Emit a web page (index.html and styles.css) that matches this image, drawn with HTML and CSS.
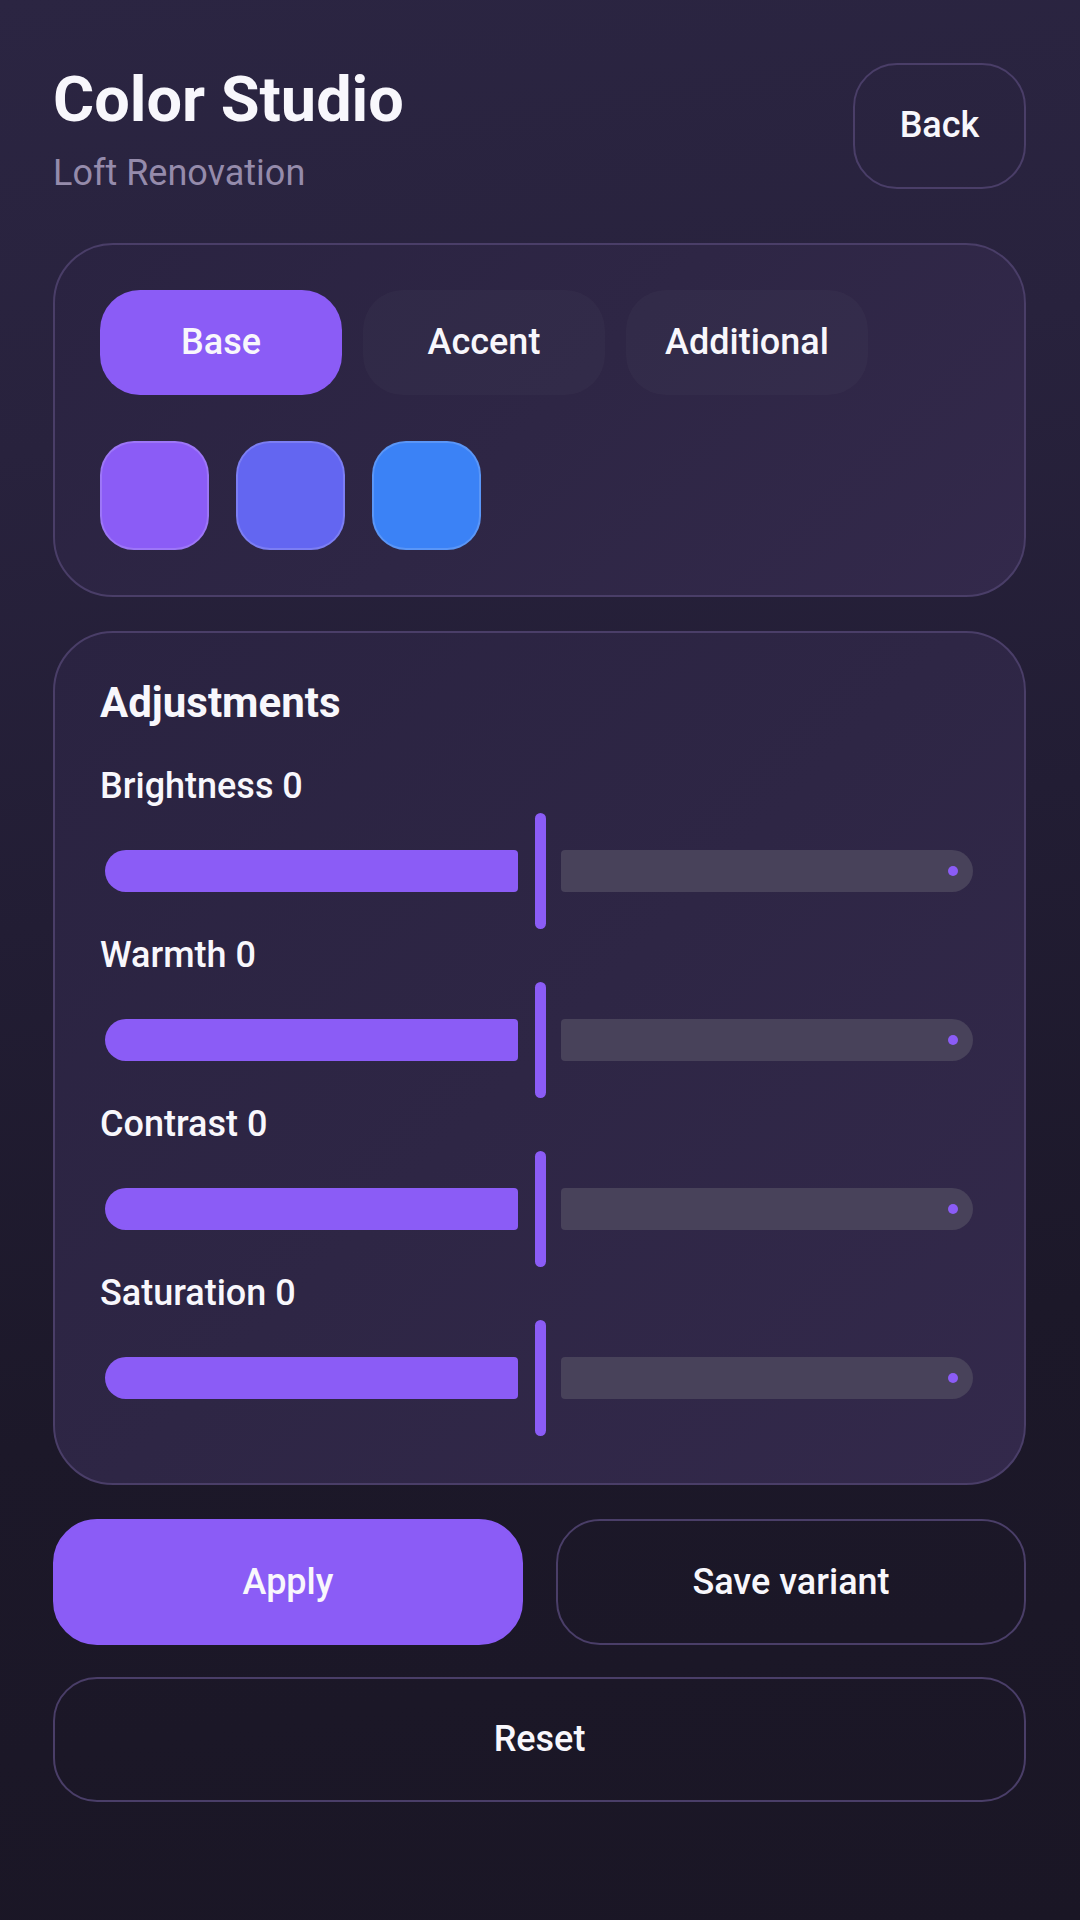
FILE: index.html
```html
<!DOCTYPE html>
<html lang="en">
<head>
<meta charset="utf-8">
<title>Color Studio</title>
<link rel="stylesheet" href="styles.css">
</head>
<body>
<main class="page">
  <header class="header">
    <div class="heading">
      <h1 class="title">Color Studio</h1>
      <p class="subtitle">Loft Renovation</p>
    </div>
    <button class="btn btn-outline btn-back">Back</button>
  </header>

  <section class="card palette">
    <div class="tabs">
      <button class="tab tab-active">Base</button>
      <button class="tab">Accent</button>
      <button class="tab">Additional</button>
    </div>
    <div class="swatches">
      <span class="swatch swatch-violet"></span>
      <span class="swatch swatch-indigo"></span>
      <span class="swatch swatch-blue"></span>
    </div>
  </section>

  <section class="card adjustments">
    <h2 class="section-title">Adjustments</h2>
    <div class="control">
      <div class="control-label">Brightness 0</div>
      <div class="slider">
        <span class="track-active"></span>
        <span class="thumb"></span>
        <span class="track-inactive"><span class="stop"></span></span>
      </div>
    </div>
    <div class="control">
      <div class="control-label">Warmth 0</div>
      <div class="slider">
        <span class="track-active"></span>
        <span class="thumb"></span>
        <span class="track-inactive"><span class="stop"></span></span>
      </div>
    </div>
    <div class="control">
      <div class="control-label">Contrast 0</div>
      <div class="slider">
        <span class="track-active"></span>
        <span class="thumb"></span>
        <span class="track-inactive"><span class="stop"></span></span>
      </div>
    </div>
    <div class="control">
      <div class="control-label">Saturation 0</div>
      <div class="slider">
        <span class="track-active"></span>
        <span class="thumb"></span>
        <span class="track-inactive"><span class="stop"></span></span>
      </div>
    </div>
  </section>

  <div class="actions">
    <button class="btn btn-primary">Apply</button>
    <button class="btn btn-outline">Save variant</button>
  </div>
  <button class="btn btn-outline btn-wide">Reset</button>
</main>
</body>
</html>
```

FILE: styles.css
```css
* {
  box-sizing: border-box;
}

html,
body {
  margin: 0;
  padding: 0;
}

body {
  min-height: 100vh;
  font-family: Roboto, "Noto Sans", "Liberation Sans", sans-serif;
  color: #f8f7fc;
  background: linear-gradient(172deg, #2b2542 0%, #28223d 22%, #221d34 45%, #1c1829 70%, #1a1625 100%);
}

.page {
  padding: 61px 54px 0 53px;
  display: flex;
  flex-direction: column;
}

/* Header */
.header {
  display: flex;
  justify-content: space-between;
  align-items: flex-start;
  margin-bottom: 48px;
}

.title {
  margin: 0;
  font-size: 63px;
  line-height: 77px;
  font-weight: 700;
  color: #f8f7fc;
}

.subtitle {
  margin: 14px 0 0;
  font-size: 36px;
  line-height: 1.2;
  font-weight: 400;
  color: #958bab;
}

/* Buttons */
.btn {
  font-family: inherit;
  font-size: 36px;
  font-weight: 500;
  line-height: 1.2;
  color: #f8f7fc;
  height: 126px;
  border-radius: 44px;
  display: flex;
  align-items: center;
  justify-content: center;
  padding: 0;
  cursor: pointer;
}

.btn-outline {
  background: transparent;
  border: 2px solid #4a3e68;
}

.btn-primary {
  background: #8b5cf6;
  border: 2px solid #8b5cf6;
}

.btn-back {
  width: 173px;
  margin-top: 2px;
}

.btn-wide {
  width: 100%;
  margin-top: 32px;
  height: 125px;
}

.actions {
  display: grid;
  grid-template-columns: 1fr 1fr;
  gap: 33px;
}

/* Cards */
.card {
  border: 2px solid #4a3e68;
  border-radius: 60px;
  background: linear-gradient(135deg, #2a2341 0%, #2e2645 50%, #33294b 100%);
}

.palette {
  padding: 45px;
  display: flex;
  flex-direction: column;
  gap: 46px;
}

.tabs {
  display: flex;
  gap: 21px;
}

.tab {
  width: 242px;
  height: 105px;
  border: none;
  border-radius: 40px;
  background: rgba(255, 255, 255, 0.025);
  font-family: inherit;
  font-size: 36px;
  font-weight: 500;
  line-height: 1.2;
  color: #f8f7fc;
  display: flex;
  align-items: center;
  justify-content: center;
  padding: 0;
}

.tab-active {
  background: #8b5cf6;
}

.swatches {
  display: flex;
  gap: 27px;
}

.swatch {
  width: 109px;
  height: 109px;
  border-radius: 34px;
  border: 2px solid rgba(255, 255, 255, 0.16);
}

.swatch-violet {
  background: #8b5cf6;
}

.swatch-indigo {
  background: #6366f1;
}

.swatch-blue {
  background: #3b82f6;
}

/* Adjustments */
.adjustments {
  margin-top: 34px;
  margin-bottom: 34px;
  padding: 45px 45px 42px;
}

.section-title {
  margin: 0 0 37px;
  font-size: 42px;
  line-height: 50px;
  font-weight: 700;
}

.control-label {
  font-size: 36px;
  line-height: 42px;
  font-weight: 500;
}

.slider {
  height: 127px;
  display: flex;
  align-items: center;
  padding: 0 6px 0 5px;
}

.track-active,
.track-inactive {
  flex: 1 1 0;
  min-width: 0;
  height: 42px;
}

.track-active {
  background: #8b5cf6;
  border-radius: 21px 4px 4px 21px;
}

.thumb {
  flex: none;
  width: 11px;
  height: 116px;
  border-radius: 6px;
  background: #8b5cf6;
  margin: 0 15px 0 17px;
}

.track-inactive {
  background: #48425a;
  border-radius: 4px 21px 21px 4px;
  display: flex;
  align-items: center;
  justify-content: flex-end;
}

.stop {
  flex: none;
  width: 10px;
  height: 10px;
  margin-right: 15px;
  border-radius: 50%;
  background: #8b5cf6;
}
```
